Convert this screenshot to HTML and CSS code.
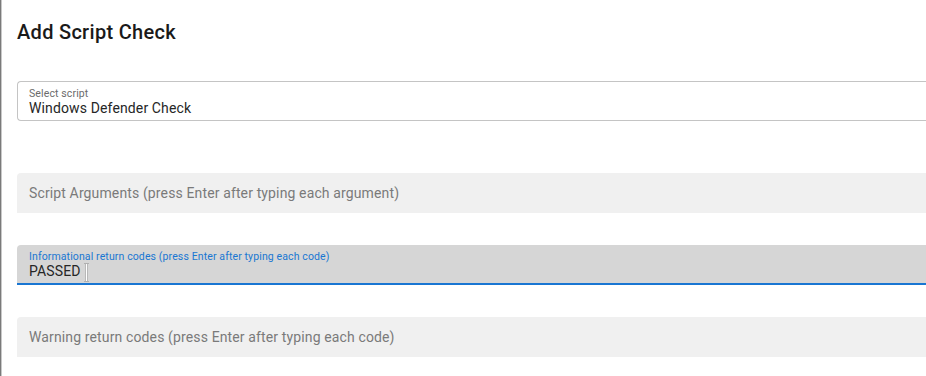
FILE: index.html
```html
<!DOCTYPE html>
<html>
<head>
<meta charset="utf-8">
<link rel="stylesheet" href="styles.css">
</head>
<body>
<div class="dialog">
  <h1 class="title">Add Script Check</h1>
  <div class="form">
    <div class="field outlined">
      <span class="label">Select script</span>
      <span class="value">Windows Defender Check</span>
    </div>
    <div class="field filled gap-big">
      <span class="placeholder">Script Arguments (press Enter after typing each argument)</span>
    </div>
    <div class="field filled focused">
      <span class="label blue">Informational return codes (press Enter after typing each code)</span>
      <span class="value">PASSED<span class="ibeam"></span></span>
    </div>
    <div class="field filled">
      <span class="placeholder">Warning return codes (press Enter after typing each code)</span>
    </div>
  </div>
</div>
</body>
</html>
```
FILE: styles.css
```css
html, body {
  margin: 0;
  padding: 0;
  width: 926px;
  height: 376px;
  overflow: hidden;
  background: #ffffff;
  font-family: Roboto, "Liberation Sans", sans-serif;
}
.dialog {
  height: 376px;
  box-sizing: border-box;
  border-left: 1px solid #7a7a7a;
  box-shadow: inset 1px 0 0 #c8c8c8;
  padding: 16px 0 0 16px;
}
.title {
  margin: 0;
  font-size: 20px;
  font-weight: 500;
  line-height: 32px;
  color: #1a1a1a;
  letter-spacing: 0.3px;
}
.form {
  display: flex;
  flex-direction: column;
  gap: 32px;
  margin-top: 33px;
}
.field {
  position: relative;
  height: 40px;
  box-sizing: border-box;
  display: flex;
  flex-direction: column;
  justify-content: center;
  padding: 0 12px;
}
.outlined {
  border: 1px solid #c4c4c4;
  border-right: none;
  border-radius: 4px 0 0 4px;
  padding: 2px 11px 0;
}
.filled {
  background: #f0f0f0;
  border-radius: 4px 0 0 0;
}
.gap-big {
  margin-top: 20px;
}
.focused {
  background: #d6d6d6;
  border-bottom: 2px solid #1976d2;
  padding-top: 2px;
}
.label {
  font-size: 10.5px;
  line-height: 12px;
  color: #6b6b6b;
  letter-spacing: 0.12px;
}
.label.blue {
  color: #1976d2;
}
.value {
  font-size: 14px;
  line-height: 17px;
  color: #262626;
  position: relative;
  letter-spacing: 0.13px;
}
.placeholder {
  font-size: 14px;
  line-height: 17px;
  color: #7a7a7a;
  padding-top: 1px;
  letter-spacing: 0.13px;
}
.ibeam {
  position: absolute;
  left: 56px;
  top: 0px;
  width: 3px;
  height: 19px;
}
.ibeam::before {
  content: "";
  position: absolute;
  left: 1px;
  top: 0;
  width: 1px;
  height: 19px;
  background: #ffffff;
  box-shadow: -1px 0 0 #b8b8b8, 1px 0 0 #b8b8b8;
}
.ibeam::after {
  content: "";
  position: absolute;
  left: -1px;
  top: 0;
  width: 5px;
  height: 19px;
  border-top: 1px solid #b0b0b0;
  border-bottom: 1px solid #b0b0b0;
  box-sizing: border-box;
}
```
